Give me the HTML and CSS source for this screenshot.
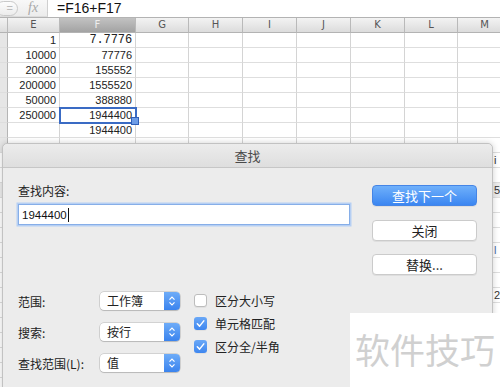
FILE: index.html
```html
<!DOCTYPE html>
<html lang="zh">
<head>
<meta charset="utf-8">
<link rel="stylesheet" href="styles.css">
</head>
<body>
<div class="app">
  <div class="formula-bar">
    <div class="fx-box"><span class="eq-btn">=</span><span class="fx">fx</span></div>
    <div class="formula">=F16+F17</div>
  </div>
  <div class="sheet">
    <div class="row header">
      <div class="c rh"></div><div class="c">E</div><div class="c hsel">F</div><div class="c">G</div><div class="c">H</div><div class="c">I</div><div class="c">J</div><div class="c">K</div><div class="c">L</div><div class="c">M</div>
    </div>
    <div class="row">
      <div class="c rh"></div><div class="c">1</div><div class="c mono">7.7776</div><div class="c"></div><div class="c"></div><div class="c"></div><div class="c"></div><div class="c"></div><div class="c"></div><div class="c"></div>
    </div>
    <div class="row">
      <div class="c rh"></div><div class="c">10000</div><div class="c">77776</div><div class="c"></div><div class="c"></div><div class="c"></div><div class="c"></div><div class="c"></div><div class="c"></div><div class="c"></div>
    </div>
    <div class="row">
      <div class="c rh"></div><div class="c">20000</div><div class="c">155552</div><div class="c"></div><div class="c"></div><div class="c"></div><div class="c"></div><div class="c"></div><div class="c"></div><div class="c"></div>
    </div>
    <div class="row">
      <div class="c rh"></div><div class="c">200000</div><div class="c">1555520</div><div class="c"></div><div class="c"></div><div class="c"></div><div class="c"></div><div class="c"></div><div class="c"></div><div class="c"></div>
    </div>
    <div class="row">
      <div class="c rh"></div><div class="c">50000</div><div class="c">388880</div><div class="c"></div><div class="c"></div><div class="c"></div><div class="c"></div><div class="c"></div><div class="c"></div><div class="c"></div>
    </div>
    <div class="row">
      <div class="c rh"></div><div class="c">250000</div><div class="c active">1944400</div><div class="c"></div><div class="c"></div><div class="c"></div><div class="c"></div><div class="c"></div><div class="c"></div><div class="c"></div>
    </div>
    <div class="row">
      <div class="c rh"></div><div class="c"></div><div class="c">1944400</div><div class="c"></div><div class="c"></div><div class="c"></div><div class="c"></div><div class="c"></div><div class="c"></div><div class="c"></div>
    </div>
    <div class="row"><div class="c rh"></div><div class="c"></div><div class="c"></div><div class="c"></div><div class="c"></div><div class="c"></div><div class="c"></div><div class="c"></div><div class="c"></div><div class="c"></div></div>
    <div class="lrow"><span class="frag">i</span></div>
    <div class="lrow"></div>
    <div class="lrow gray"><span class="frag">5</span></div>
    <div class="lrow"></div>
    <div class="lrow"></div>
    <div class="lrow"></div>
    <div class="lrow"><span class="frag blue">l</span></div>
    <div class="lrow"></div>
    <div class="lrow"></div>
    <div class="lrow"><span class="frag">2</span></div>
    <div class="lrow"></div>
    <div class="lrow"></div>
    <div class="lrow"></div>
    <div class="lrow"></div>
    <div class="lrow"></div>
    <div class="lrow"></div>
  </div>

  <div class="dialog">
    <div class="title">查找</div>
    <div class="body">
      <div class="top">
        <div class="find-col">
          <div class="label">查找内容:</div>
          <div class="input"><span class="val">1944400</span><span class="caret"></span></div>
        </div>
        <div class="buttons">
          <div class="btn primary">查找下一个</div>
          <div class="btn">关闭</div>
          <div class="btn">替换...</div>
        </div>
      </div>
      <div class="bottom">
        <div class="opts">
          <div class="label">范围:</div>
          <div class="select"><span class="sv">工作簿</span><span class="step"><svg width="8" height="12" viewBox="0 0 8 12"><path d="M1.5 4.6 L4 2.1 L6.5 4.6 M1.5 7.4 L4 9.9 L6.5 7.4" fill="none" stroke="#fff" stroke-width="1.2"/></svg></span></div>
          <div class="label">搜索:</div>
          <div class="select"><span class="sv">按行</span><span class="step"><svg width="8" height="12" viewBox="0 0 8 12"><path d="M1.5 4.6 L4 2.1 L6.5 4.6 M1.5 7.4 L4 9.9 L6.5 7.4" fill="none" stroke="#fff" stroke-width="1.2"/></svg></span></div>
          <div class="label">查找范围(L):</div>
          <div class="select"><span class="sv">值</span><span class="step"><svg width="8" height="12" viewBox="0 0 8 12"><path d="M1.5 4.6 L4 2.1 L6.5 4.6 M1.5 7.4 L4 9.9 L6.5 7.4" fill="none" stroke="#fff" stroke-width="1.2"/></svg></span></div>
        </div>
        <div class="checks">
          <div class="chk"><span class="box"></span><span>区分大小写</span></div>
          <div class="chk"><span class="box on"><svg width="13" height="13" viewBox="0 0 13 13"><path d="M3.3 6.8 L5.6 9.1 L9.8 3.9" fill="none" stroke="#fff" stroke-width="1.5" stroke-linecap="round" stroke-linejoin="round"/></svg></span><span>单元格匹配</span></div>
          <div class="chk"><span class="box on"><svg width="13" height="13" viewBox="0 0 13 13"><path d="M3.3 6.8 L5.6 9.1 L9.8 3.9" fill="none" stroke="#fff" stroke-width="1.5" stroke-linecap="round" stroke-linejoin="round"/></svg></span><span>区分全/半角</span></div>
        </div>
      </div>
    </div>
  </div>

  <div class="watermark">软件技巧</div>
</div>
</body>
</html>
```

FILE: styles.css
```css
* { box-sizing: border-box; }
html, body { margin: 0; padding: 0; }
body {
  width: 500px;
  height: 387px;
  overflow: hidden;
  background: #fff;
  font-family: "Liberation Sans", "Noto Sans CJK SC", sans-serif;
  color: #222;
}
.app {
  position: relative;
  width: 500px;
  height: 387px;
  overflow: hidden;
}

/* formula bar */
.formula-bar {
  display: flex;
  height: 17px;
  background: #fff;
}
.fx-box {
  position: relative;
  width: 48px;
  height: 17px;
  background: linear-gradient(#f8f8f8, #ececec);
  border-right: 1px solid #cfcfcf;
  border-bottom: 1px solid #dcdcdc;
  overflow: hidden;
}
.eq-btn {
  position: absolute;
  left: -4px;
  top: 1px;
  width: 22px;
  height: 15px;
  border: 1px solid #c9c9c9;
  border-radius: 8px;
  background: linear-gradient(#fdfdfd, #ececec);
  color: #bdbdbd;
  font-size: 11px;
  line-height: 13px;
  text-align: right;
  padding-right: 4px;
}
.fx {
  position: absolute;
  left: 28px;
  top: 0;
  font-family: "Liberation Serif", serif;
  font-style: italic;
  font-size: 14px;
  line-height: 16px;
  color: #a8a8a8;
}
.formula {
  padding-left: 9px;
  font-size: 14px;
  line-height: 17px;
  color: #111;
}

/* sheet */
.sheet { display: flex; flex-direction: column; }
.row {
  display: grid;
  grid-template-columns: 8px 52px 76px 53px 54px 54px 54px 54px 53px 54px;
  height: 15px;
  width: 512px;
}
.c {
  border-right: 1px solid #d4d4d4;
  border-bottom: 1px solid #dedede;
  font-size: 11px;
  line-height: 14px;
  text-align: right;
  padding-right: 3px;
  white-space: nowrap;
  color: #222;
}
.c.rh { background: #e6e6e6; border-right: 1px solid #b5b5b5; }
.mono {
  font-family: "Liberation Mono", monospace;
  font-size: 12px;
  letter-spacing: -0.1px;
}
.row.header {
  height: 16px;
  border-top: 1px solid #b3b3b3;
}
.row.header .c {
  background: linear-gradient(#f3f3f3, #dcdcdc);
  border-right: 1px solid #b9b9b9;
  border-bottom: 1px solid #b3b3b3;
  text-align: center;
  padding: 0;
  font-family: "DejaVu Sans", sans-serif;
  font-size: 10px;
  line-height: 14px;
  color: #555;
}
.row.header .c.hsel {
  background: linear-gradient(#c2c2c2, #a3a3a3);
  color: #eee;
}
.c.active {
  position: relative;
  outline: 2px solid #3a6bc4;
  outline-offset: -1px;
}
.c.active::after {
  content: "";
  position: absolute;
  right: -4px;
  bottom: -3px;
  width: 6px;
  height: 6px;
  background: #6d9ce6;
  border: 1px solid #2f5fb8;
}
.lrow {
  height: 15px;
  border-bottom: 1px solid #dedede;
  font-size: 11px;
  line-height: 14px;
  padding-left: 494px;
  white-space: nowrap;
  color: #333;
}
.lrow.gray { background: #ececec; }
.frag.blue { color: #4a6fa8; }

/* dialog */
.dialog {
  position: absolute;
  left: 2px;
  top: 143px;
  width: 491px;
  height: 270px;
  background: #ececec;
  border: 1px solid #c2c2c2;
  border-radius: 5px 5px 0 0;
  box-shadow: 0 0 6px rgba(0, 0, 0, 0.18);
  font-family: "Noto Sans CJK SC", "Liberation Sans", sans-serif;
  color: #222;
}
.title {
  height: 24px;
  border-bottom: 1px solid #c6c6c6;
  background: linear-gradient(#ececec, #dedede);
  border-radius: 5px 5px 0 0;
  text-align: center;
  font-size: 13px;
  line-height: 23px;
  color: #4a4a4a;
}
.body { padding: 16px 15px 0 15px; }
.top { display: flex; gap: 22px; }
.find-col { width: 332px; display: flex; flex-direction: column; }
.label {
  font-size: 12px;
  line-height: 14px;
  color: #222;
}
.find-col .label { margin-bottom: 6px; }
.input {
  height: 21px;
  background: #fff;
  border: 1px solid #86aee8;
  box-shadow: 0 0 0 1.5px #b6cff3;
  display: flex;
  align-items: center;
  padding-left: 3px;
}
.val {
  font-family: "Liberation Sans", sans-serif;
  font-size: 11.5px;
  color: #111;
}
.caret {
  width: 1px;
  height: 14px;
  background: #111;
  margin-left: 1px;
}
.buttons {
  width: 105px;
  margin-top: 1px;
  display: flex;
  flex-direction: column;
  gap: 13.5px;
}
.btn {
  height: 21px;
  border-radius: 4px;
  background: #fff;
  border: 1px solid #cbcbcb;
  box-shadow: 0 1px 0 rgba(0, 0, 0, 0.06);
  text-align: center;
  font-size: 13px;
  line-height: 19px;
  color: #222;
}
.btn.primary {
  background: linear-gradient(#6fb0fb, #3b86f1);
  border: 1px solid #4585e6;
  color: #fff;
}
.bottom {
  display: flex;
  gap: 14px;
  margin-top: 14px;
}
.opts {
  padding-top: 3px;
  display: grid;
  grid-template-columns: 82px 80px;
  grid-auto-rows: 18px;
  row-gap: 13px;
  align-items: center;
}
.opts .label { line-height: 18px; padding-top: 2px; }
.select {
  height: 18px;
  border-radius: 4px;
  background: #fff;
  box-shadow: 0 0 0 0.5px rgba(0, 0, 0, 0.22), 0 1px 1px rgba(0, 0, 0, 0.12);
  display: flex;
  justify-content: space-between;
  overflow: hidden;
}
.sv {
  font-size: 12px;
  line-height: 18px;
  padding-left: 7px;
  color: #222;
}
.step {
  width: 16px;
  height: 18px;
  background: linear-gradient(#6eacf8, #3a83ee);
  display: flex;
  align-items: center;
  justify-content: center;
}
.checks { display: flex; flex-direction: column; }
.chk {
  height: 23px;
  display: flex;
  align-items: center;
  gap: 8px;
  font-size: 12px;
  color: #222;
}
.box {
  width: 13px;
  height: 13px;
  border-radius: 3px;
  background: #fff;
  border: 1px solid #bdbdbd;
  box-shadow: 0 1px 0 rgba(0, 0, 0, 0.05);
  display: flex;
}
.box.on {
  background: linear-gradient(#6aa8f7, #3e86ef);
  border: none;
}

/* watermark overlay */
.watermark {
  position: absolute;
  left: 350px;
  top: 313px;
  width: 150px;
  height: 74px;
  background: #fff;
  padding-left: 5px;
  font-family: "Noto Sans CJK SC", sans-serif;
  font-size: 35px;
  line-height: 72px;
  color: #d0d0d0;
  white-space: nowrap;
}
```
